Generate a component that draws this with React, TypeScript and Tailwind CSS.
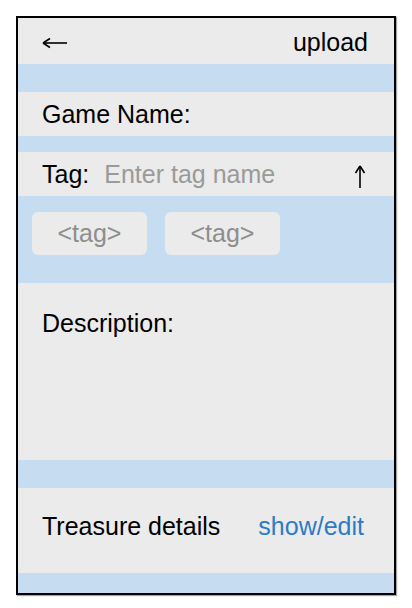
export default function App() {
  const tags = ["<tag>", "<tag>"];

  return (
    <div className="min-h-screen bg-white p-4 font-['Liberation_Sans',Arial,sans-serif] text-[25px] text-black">
      <div className="w-[380px] h-[579px] border-2 border-black flex flex-col bg-[#c6ddf1] shadow-[1px_1px_1px_rgba(0,0,0,0.35)]">
        {/* Header */}
        <div className="h-[46px] shrink-0 bg-[#ebebeb] flex items-center justify-between pl-6 pr-[26px] pt-[4px]">
          <svg width="26" height="12" viewBox="0 0 26 12" fill="none" stroke="black" strokeWidth="1.6">
            <path d="M1 6H25" />
            <path d="M1 6L8 1.5M1 6L8 10.5" />
          </svg>
          <span>upload</span>
        </div>

        <div className="h-[28px] shrink-0" />

        {/* Game name */}
        <div className="h-[44px] shrink-0 bg-[#ebebeb] flex items-center px-6 pt-[2px]">
          <span>Game Name:</span>
        </div>

        <div className="h-[16px] shrink-0" />

        {/* Tag input */}
        <div className="h-[44px] shrink-0 bg-[#ebebeb] flex items-center pl-6 pr-[28px] pt-[2px]">
          <span>Tag:</span>
          <span className="ml-[15px] text-[#9a9a9a]">Enter tag name</span>
          <svg width="12" height="24" viewBox="0 0 12 24" className="ml-auto mt-[3px]" fill="none" stroke="black" strokeWidth="1.6">
            <path d="M6 1V23" />
            <path d="M6 1L1.5 8M6 1L10.5 8" />
          </svg>
        </div>

        {/* Tags list */}
        <div className="h-[87px] shrink-0 flex items-start gap-[18px] pt-[16px] pl-[14px]">
          {tags.map((tag, i) => (
            <div
              key={i}
              className="w-[115px] h-[43px] rounded-md bg-[#ebebeb] flex items-center justify-center text-[#8e8e8e]"
            >
              {tag}
            </div>
          ))}
        </div>

        {/* Description */}
        <div className="h-[177px] shrink-0 bg-[#ebebeb] px-6 pt-[22px]">
          <span>Description:</span>
        </div>

        <div className="h-[28px] shrink-0" />

        {/* Treasure */}
        <div className="h-[85px] shrink-0 bg-[#ebebeb] flex items-start pl-6 pt-[20px]">
          <span>Treasure details</span>
          <span className="ml-[38px] text-[#2b7bc6]">show/edit</span>
        </div>

        <div className="flex-1" />
      </div>
    </div>
  );
}
